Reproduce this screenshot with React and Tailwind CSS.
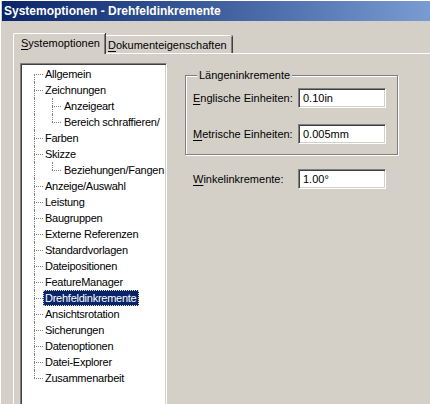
const TREE = [
  ['Allgemein', 0],
  ['Zeichnungen', 0],
  ['Anzeigeart', 1],
  ['Bereich schraffieren/', 1],
  ['Farben', 0],
  ['Skizze', 0],
  ['Beziehungen/Fangen', 1],
  ['Anzeige/Auswahl', 0],
  ['Leistung', 0],
  ['Baugruppen', 0],
  ['Externe Referenzen', 0],
  ['Standardvorlagen', 0],
  ['Dateipositionen', 0],
  ['FeatureManager', 0],
  ['Drehfeldinkremente', 0],
  ['Ansichtsrotation', 0],
  ['Sicherungen', 0],
  ['Datenoptionen', 0],
  ['Datei-Explorer', 0],
  ['Zusammenarbeit', 0],
];

const SELECTED = 'Drehfeldinkremente';

const sunken =
  'border border-t-[#808080] border-l-[#808080] border-r-white border-b-white shadow-[inset_1px_1px_0_#404040,inset_-1px_-1px_0_#d4d0c8]';

function Accel({ children }) {
  return <span className="underline underline-offset-2">{children}</span>;
}

function TreeRow({ label, level, index }) {
  const isLast = index === TREE.length - 1;
  const isFirst = index === 0;
  const next = TREE[index + 1];
  const lastChild = level === 1 && (!next || next[1] !== 1);
  const selected = label === SELECTED;

  let rootLine = 'top-0 bottom-0';
  if (isFirst) rootLine = 'top-[8px] bottom-0';
  if (isLast) rootLine = 'top-0 h-[8px]';

  return (
    <div className="relative flex h-4 items-center">
      <span className={`absolute left-[12px] w-0 border-l border-dotted border-[#808080] ${rootLine}`} />
      {level === 0 ? (
        <span className="absolute left-[12px] top-[8px] w-[9px] border-t border-dotted border-[#808080]" />
      ) : (
        <>
          <span
            className={`absolute left-[30px] w-0 border-l border-dotted border-[#808080] ${
              lastChild ? 'top-0 h-[8px]' : 'top-0 bottom-0'
            }`}
          />
          <span className="absolute left-[30px] top-[8px] w-[9px] border-t border-dotted border-[#808080]" />
        </>
      )}
      <span
        className={`relative flex h-4 items-center whitespace-nowrap border px-px leading-none tracking-[-0.25px] ${
          level === 0 ? 'ml-[21px]' : 'ml-[40px]'
        } ${
          selected
            ? 'border-dotted border-[#e9e2b0] bg-[#0a246a] text-white'
            : 'border-transparent text-black'
        }`}
      >
        {label}
      </span>
    </div>
  );
}

function Field({ label, accel, value }) {
  return (
    <div className="flex h-5 items-center">
      <div className="w-[105px] whitespace-nowrap">
        <Accel>{accel}</Accel>
        {label}
      </div>
      <div className={`flex h-5 w-[88px] items-center bg-white pl-[4px] ${sunken}`}>{value}</div>
    </div>
  );
}

export default function App() {
  return (
    <div
      className="h-[404px] w-[430px] overflow-hidden border-l border-t border-white bg-[#d4d0c8] text-[11px] text-black"
      style={{ fontFamily: '"Liberation Sans", Arial, sans-serif' }}
    >
      <div className="ml-px flex h-5 items-center bg-gradient-to-r from-[#0a246a] to-[#7a9bd2] pl-[2px] text-[12px] font-bold text-white">
        Systemoptionen - Drehfeldinkremente
      </div>

      <div className="ml-[12px] mt-[12px] flex items-end">
        <div className="relative z-10 -mb-px flex h-[21px] w-[92px] items-center rounded-tl-[2px] border-l border-t border-white bg-[#d4d0c8] pb-px pl-[7px] shadow-[inset_-1px_0_0_#808080,1px_0_0_#404040]">
          <Accel>S</Accel>ystemoptionen
        </div>
        <div className="flex h-[18px] w-[127px] items-center rounded-tr-[2px] border-t border-white pl-[3px] pt-px shadow-[inset_-1px_0_0_#808080,1px_0_0_#404040]">
          <Accel>D</Accel>okumenteigenschaften
        </div>
      </div>

      <div className="ml-[12px] flex border-l border-t border-white">
        <div className={`ml-[6px] mt-[9px] h-[360px] w-[147px] shrink-0 overflow-hidden bg-white pt-[1px] ${sunken}`}>
          <div className="pl-px pt-px">
            {TREE.map(([label, level], i) => (
              <TreeRow key={label} label={label} level={level} index={i} />
            ))}
          </div>
        </div>

        <div className="ml-[18px] mt-[14px]">
          <fieldset className="w-[213px] border border-[#808080] px-[7px] pb-[10px] shadow-[inset_1px_1px_0_#fff,1px_1px_0_#fff]">
            <legend className="ml-[4px] bg-[#d4d0c8] px-[2px] leading-[14px]">Längeninkremente</legend>
            <div className="mt-[6px] flex flex-col gap-4">
              <Field accel="E" label="nglische Einheiten:" value="0.10in" />
              <Field accel="M" label="etrische Einheiten:" value="0.005mm" />
            </div>
          </fieldset>
          <div className="ml-[8px] mt-[14px]">
            <Field accel="W" label="inkelinkremente:" value="1.00°" />
          </div>
        </div>
      </div>
    </div>
  );
}
